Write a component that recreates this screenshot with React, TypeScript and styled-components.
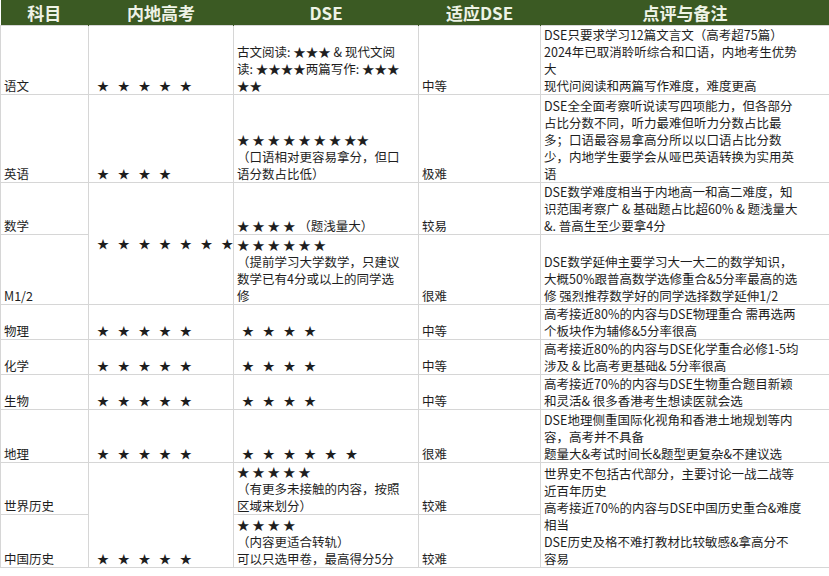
import React from 'react';
import styled, {createGlobalStyle} from 'styled-components';

const GlobalStyle = createGlobalStyle`
    html, body {
        margin: 0;
        background: #ffffff;
    }
    body {
        font-family: "Noto Sans CJK SC", "Noto Sans", sans-serif;
        color: #1e1e1e;
    }
`;

const Table = styled.table`
    width: 829px;
    table-layout: fixed;
    border-collapse: collapse;
    font-size: 12.5px;
    line-height: 17px;
`;

const HeadCell = styled.th`
    background: #3b5a23;
    color: #eef3e6;
    font-size: 17px;
    font-weight: 700;
    height: 25px;
    padding: 0;
    line-height: 25px;
    text-align: center;
    border-right: 1px solid #3b5a23;
`;

const Cell = styled.td<{$stars?: boolean; $middle?: boolean}>`
    border: 1px solid #d6d6d6;
    padding: 0 2px 0 ${p => (p.$stars ? '8px' : '3px')};
    vertical-align: ${p => (p.$middle ? 'middle' : 'bottom')};
    white-space: nowrap;
    overflow: hidden;
    letter-spacing: ${p => (p.$stars ? '3px' : '0')};
    font-size: ${p => (p.$stars ? '12px' : '12.5px')};
`;

const Row = styled.tr<{$h: number}>`
    height: ${p => p.$h}px;
`;

const lines = (t: string[]) => t.map((l, i) => (
    <React.Fragment key={i}>
        {i > 0 && <br/>}
        {l}
    </React.Fragment>
));

const s = (n: number) => Array(n).fill('★').join(' ');

export default function App() {
    return (
        <>
            <GlobalStyle/>
            <Table>
                <colgroup>
                    <col style={{width: 88}}/>
                    <col style={{width: 145}}/>
                    <col style={{width: 185}}/>
                    <col style={{width: 122}}/>
                    <col style={{width: 289}}/>
                </colgroup>
                <thead>
                    <tr>
                        <HeadCell>{'科目'}</HeadCell>
                        <HeadCell>{'内地高考'}</HeadCell>
                        <HeadCell>{'DSE'}</HeadCell>
                        <HeadCell>{'适应DSE'}</HeadCell>
                        <HeadCell>{'点评与备注'}</HeadCell>
                    </tr>
                </thead>
                <tbody>
                    <Row $h={69}>
                        <Cell>{'语文'}</Cell>
                        <Cell $stars>{s(5)}</Cell>
                        <Cell>{lines(['古文阅读: ★★★ & 现代文阅', '读: ★★★★两篇写作: ★★★', '★★'])}</Cell>
                        <Cell>{'中等'}</Cell>
                        <Cell>{lines(['DSE只要求学习12篇文言文（高考超75篇）', '2024年已取消聆听综合和口语，内地考生优势', '大', '现代问阅读和两篇写作难度，难度更高'])}</Cell>
                    </Row>
                    <Row $h={88}>
                        <Cell>{'英语'}</Cell>
                        <Cell $stars>{s(4)}</Cell>
                        <Cell>{lines(['  ★ ★ ★ ★ ★ ★ ★ ★★', '（口语相对更容易拿分，但口', '语分数占比低）'])}</Cell>
                        <Cell>{'极难'}</Cell>
                        <Cell>{lines(['DSE全全面考察听说读写四项能力，但各部分', '占比分数不同，听力最难但听力分数占比最', '多；口语最容易拿高分所以以口语占比分数', '少，内地学生要学会从哑巴英语转换为实用英', '语'])}</Cell>
                    </Row>
                    <Row $h={52}>
                        <Cell>{'数学'}</Cell>
                        <Cell $stars $middle rowSpan={2}>{s(7)}</Cell>
                        <Cell>{'  ★ ★ ★ ★ （题浅量大）'}</Cell>
                        <Cell>{'较易'}</Cell>
                        <Cell>{lines(['DSE数学难度相当于内地高一和高二难度，知', '识范围考察广 & 基础题占比超60% & 题浅量大', '&. 普高生至少要拿4分'])}</Cell>
                    </Row>
                    <Row $h={70}>
                        <Cell>{'M1/2'}</Cell>
                        <Cell>{lines(['  ★ ★ ★ ★ ★ ★', '（提前学习大学数学，只建议', '数学已有4分或以上的同学选', '修'])}</Cell>
                        <Cell>{'很难'}</Cell>
                        <Cell>{lines(['DSE数学延伸主要学习大一大二的数学知识，', '大概50%跟普高数学选修重合&5分率最高的选', '修 强烈推荐数学好的同学选择数学延伸1/2'])}</Cell>
                    </Row>
                    <Row $h={35}>
                        <Cell>{'物理'}</Cell>
                        <Cell $stars>{s(5)}</Cell>
                        <Cell $stars>{s(4)}</Cell>
                        <Cell>{'中等'}</Cell>
                        <Cell>{lines(['高考接近80%的内容与DSE物理重合 需再选两', '个板块作为辅修&5分率很高'])}</Cell>
                    </Row>
                    <Row $h={35}>
                        <Cell>{'化学'}</Cell>
                        <Cell $stars>{s(5)}</Cell>
                        <Cell $stars>{s(4)}</Cell>
                        <Cell>{'中等'}</Cell>
                        <Cell>{lines(['高考接近80%的内容与DSE化学重合必修1-5均', '涉及 & 比高考更基础& 5分率很高'])}</Cell>
                    </Row>
                    <Row $h={35}>
                        <Cell>{'生物'}</Cell>
                        <Cell $stars>{s(5)}</Cell>
                        <Cell $stars>{s(4)}</Cell>
                        <Cell>{'中等'}</Cell>
                        <Cell>{lines(['高考接近70%的内容与DSE生物重合题目新颖', '和灵活& 很多香港考生想读医就会选'])}</Cell>
                    </Row>
                    <Row $h={53}>
                        <Cell>{'地理'}</Cell>
                        <Cell $stars>{s(5)}</Cell>
                        <Cell $stars>{s(6)}</Cell>
                        <Cell>{'很难'}</Cell>
                        <Cell>{lines(['DSE地理侧重国际化视角和香港土地规划等内', '容，高考并不具备', '题量大&考试时间长&题型更复杂&不建议选'])}</Cell>
                    </Row>
                    <Row $h={52}>
                        <Cell>{'世界历史'}</Cell>
                        <Cell $stars rowSpan={2}>{s(5)}</Cell>
                        <Cell>{lines(['  ★ ★ ★ ★ ★', '（有更多未接触的内容，按照', '区域来划分）'])}</Cell>
                        <Cell>{'较难'}</Cell>
                        <Cell rowSpan={2}>{lines(['世界史不包括古代部分，主要讨论一战二战等', '近百年历史', '高考接近70%的内容与DSE中国历史重合&难度', '相当', 'DSE历史及格不难打教材比较敏感&拿高分不', '容易'])}</Cell>
                    </Row>
                    <Row $h={53}>
                        <Cell>{'中国历史'}</Cell>
                        <Cell>{lines(['  ★ ★ ★ ★', '（内容更适合转轨）', '可以只选甲卷，最高得分5分'])}</Cell>
                        <Cell>{'较难'}</Cell>
                    </Row>
                </tbody>
            </Table>
        </>
    );
}
